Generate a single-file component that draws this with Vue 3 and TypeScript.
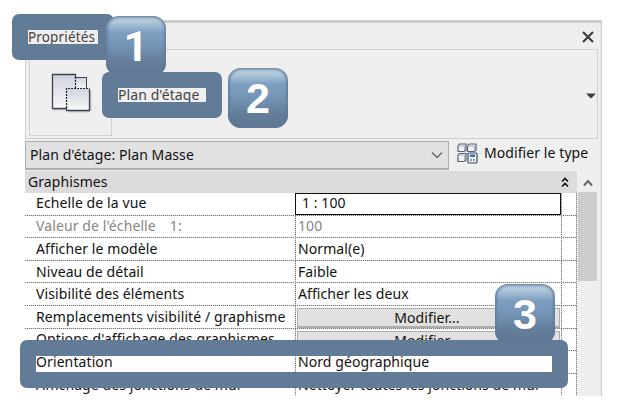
<script setup lang="ts">
interface Row {
  label: string
  value: string
  extra?: string
  kind?: 'field' | 'muted' | 'button'
}

const rows: Row[] = [
  { label: 'Echelle de la vue', value: '1 : 100', kind: 'field' },
  { label: "Valeur de l'échelle", extra: '1:', value: '100', kind: 'muted' },
  { label: 'Afficher le modèle', value: 'Normal(e)' },
  { label: 'Niveau de détail', value: 'Faible' },
  { label: 'Visibilité des éléments', value: 'Afficher les deux' },
  { label: 'Remplacements visibilité / graphisme', value: 'Modifier...', kind: 'button' },
  { label: "Options d'affichage des graphismes", value: 'Modifier...', kind: 'button' },
  { label: 'Orientation', value: 'Nord géographique' },
  { label: 'Affichage des jonctions de mur', value: 'Nettoyer toutes les jonctions de mur' },
]
</script>

<template>
  <main class="stage">
    <section class="panel">
      <header class="title">
        <span class="title-text">Propriétés</span>
        <svg class="close" width="12" height="12" viewBox="0 0 12 12"><path d="M1 1L11 11M11 1L1 11" /></svg>
      </header>

      <div class="preview">
        <div class="thumb">
          <svg width="42" height="42" viewBox="0 0 42 42">
            <defs>
              <linearGradient id="sheet" x1="0" y1="0" x2="0" y2="1">
                <stop offset="0" stop-color="#cfd3dc" />
                <stop offset="1" stop-color="#f8f9fb" />
              </linearGradient>
            </defs>
            <path d="M3 38.500H17M18 40.500H40M40.500 20V40" stroke="#c8c8c8" stroke-width="2" fill="none" />
            <rect x="24.500" y="6.500" width="12" height="12" fill="url(#sheet)" stroke="#3d4350" />
            <path d="M2.500 3.500H25.500V17.500H16.500V37.500H2.500Z" fill="url(#sheet)" />
            <path d="M16.500 37.500H2.500V3.500H25.500V6" fill="none" stroke="#3d4350" stroke-width="1.300" />
            <rect x="16.500" y="17.500" width="23" height="22" fill="url(#sheet)" />
            <path d="M39.500 17.500V39.500H16.500V37" fill="none" stroke="#3d4350" stroke-width="1.300" />
            <path d="M25.500 6V17.500M16.500 37V17.500H39" fill="none" stroke="#20242b" stroke-width="1.200" stroke-dasharray="2 1" />
          </svg>
        </div>
        <span class="preview-text">Plan d'étage</span>
        <svg class="drop" width="10" height="6" viewBox="0 0 10 6"><path d="M0 .5H10L5 5.500Z" /></svg>
      </div>

      <div class="type-bar">
        <div class="select">
          <span>Plan d'étage: Plan Masse</span>
          <svg width="12" height="8" viewBox="0 0 12 8"><path d="M1 1.500L6 6.500L11 1.500" /></svg>
        </div>
        <div class="edit-type">
          <svg width="21" height="21" viewBox="0 0 21 21">
            <g fill="#eef1f5" stroke="#596273" stroke-width="1.200">
              <path d="M1 3L2.500 1H9V7L7.500 8.500H1ZM10.500 3L12 1H19V7L17.500 8.500H10.500Z" />
              <path d="M1 12L2.500 10.500H9V17L7.500 18.500H1Z" />
              <path d="M1 3H7.500V8.500M10.500 3H17.500V8.500M1 12H7.500V18.500" fill="none" stroke="#9aa2af" stroke-width=".8" />
              <rect x="11" y="10" width="9" height="10" rx="1" stroke="#424b5c" />
            </g>
            <path d="M13 11.500H18V14H13Z" fill="#2474c5" />
            <path d="M13 17L14.500 15.500V18.500ZM18 17L16.500 15.500V18.500Z" fill="#424b5c" />
          </svg>
          <span>Modifier le type</span>
        </div>
      </div>

      <div class="grid-area">
        <div class="table">
          <div class="group">
            <span>Graphismes</span>
            <svg width="8" height="11" viewBox="0 0 8 11"><path d="M1 4.500L4 1.500L7 4.500M1 9.500L4 6.500L7 9.500" /></svg>
          </div>
          <div v-for="row in rows" :key="row.label" class="row" :class="row.kind">
            <div class="label"><span>{{ row.label }}</span><span v-if="row.extra" class="extra">{{ row.extra }}</span></div>
            <div class="value"><span>{{ row.value }}</span></div>
            <div class="end"></div>
          </div>
        </div>
        <div class="scroll">
          <svg width="10" height="8" viewBox="0 0 10 8"><path d="M1 6.500L5 2L9 6.500" /></svg>
          <div class="scroll-thumb"></div>
        </div>
      </div>
    </section>

    <div class="mark mark-title"></div>
    <div class="badge badge-one">1</div>
    <div class="mark mark-plan"></div>
    <div class="badge badge-two">2</div>
    <div class="mark mark-row"></div>
    <div class="badge badge-three">3</div>
  </main>
</template>

<style>
body {
  margin: 0;
  background: #fff;
}
</style>

<style scoped>
* {
  box-sizing: border-box;
}
.stage {
  position: relative;
  width: 624px;
  height: 408px;
  padding: 20px 22px 12px 25px;
  overflow: hidden;
  background: #fff;
  color: #111;
  font: 14px/18px "Noto Sans", "Open Sans", sans-serif;
  letter-spacing: 0.08px;
  white-space: nowrap;
}
.panel {
  width: 577px;
  height: 376px;
  overflow: hidden;
  background: #efefef;
  border-top: 3px solid #cdcdcd;
  border-right: 1px solid #c9c9c9;
}
.title {
  display: flex;
  justify-content: space-between;
  height: 26px;
  padding: 5px 7px 0 3px;
  background: #eee;
  color: #444;
}
.title-text {
  font-size: 13.5px;
  letter-spacing: 0.15px;
}
.close {
  margin-top: 3px;
}
.close path {
  fill: none;
  stroke: #3c3c3c;
  stroke-width: 2.1;
}
.preview {
  display: flex;
  width: 573px;
  height: 90px;
  padding: 0 1px 0 3px;
  border: 1px solid #d0d0d0;
}
.thumb {
  width: 83px;
  height: 86px;
  padding: 21px 0 0 20px;
  border: 1px solid #d2d2d2;
  border-top: 0;
}
.preview-text {
  padding: 36px 0 0 6px;
  color: #444;
}
.drop {
  margin: 43px 0 0 auto;
  fill: #3c3c3c;
}
.type-bar {
  display: flex;
  height: 32px;
  padding-top: 2px;
}
.select {
  display: flex;
  justify-content: space-between;
  align-items: center;
  width: 424px;
  height: 29px;
  padding: 0 5px 0 4px;
  background: #e1e1e1;
  border: 1px solid #adadad;
  border-bottom-width: 2px;
}
.select path,
.scroll path {
  fill: none;
  stroke: #666;
  stroke-width: 1.4;
}
.edit-type {
  display: flex;
  padding: 2px 0 0 8px;
}
.edit-type span {
  padding: 1px 0 0 6px;
}
.grid-area {
  display: flex;
}
.table {
  width: 552px;
  background: #fff;
}
.group {
  display: flex;
  justify-content: space-between;
  height: 22px;
  padding: 2px 8px 0 3px;
  background: #dcdcdc;
}
.group svg {
  margin-top: 4px;
}
.group path {
  fill: none;
  stroke: #111;
  stroke-width: 1.7;
}
.row {
  display: grid;
  grid-template-columns: 270px 266px 16px;
  height: 22.6px;
  background: repeating-linear-gradient(90deg, #777 0 1px, #ddd 1px 2px) left bottom / 100% 1px no-repeat;
}
.row:last-child {
  background: none;
}
.label,
.value {
  padding-top: 1.8px;
}
.row:first-of-type .label,
.field .label {
  padding-top: 1px;
}
.label {
  padding-left: 11px;
  letter-spacing: 0.1px;
}
.value {
  padding-left: 3px;
}
.value,
.end {
  background: repeating-linear-gradient(#777 0 1px, #ddd 1px 2px) left top / 1px 100% no-repeat;
}
.end {
  background-image: repeating-linear-gradient(#777 0 1px, #ddd 1px 2px), repeating-linear-gradient(#777 0 1px, #ddd 1px 2px);
  background-position: left top, right top;
}
.extra {
  margin-left: 14px;
}
.field .value {
  height: 22px;
  padding: 0 0 0 6px;
  background: #fff;
  border: 1.5px solid #111;
}
.muted {
  color: #858585;
}
.button .value {
  padding: 2px 1px 1px 2px;
}
.button .value span {
  display: block;
  height: 20px;
  line-height: 17px;
  padding-right: 3px;
  background: #e1e1e1;
  border: 1px solid #adadad;
  border-bottom-width: 2px;
  text-align: center;
}
.scroll {
  width: 19px;
  margin-left: 1px;
  text-align: center;
}
.scroll svg {
  display: block;
  margin: 8px auto 5px;
}
.scroll path {
  stroke-width: 2;
}
.scroll-thumb {
  height: 89px;
  background: #cdcdcd;
}
.mark {
  position: absolute;
  border: 16px solid #627c97;
  border-radius: 7px;
}
.mark-title {
  left: 12px;
  top: 14px;
  width: 102px;
  height: 46px;
}
.mark-plan {
  left: 102px;
  top: 72px;
  width: 120px;
  height: 46px;
}
.mark-row {
  left: 20px;
  top: 340px;
  width: 548px;
  height: 48px;
}
.badge {
  position: absolute;
  width: 60px;
  height: 60px;
  border-radius: 13px;
  background: linear-gradient(#c6d7e5 0, #abc3d8 12%, #7f9fc2 27%, #7797b9 45%, #657f9b 75%, #5d7690 100%);
  box-shadow: inset 0 0 3px 1.5px #5f7b98;
  color: #fff;
  font: bold 43px/60px "Liberation Sans", sans-serif;
  text-align: center;
  text-shadow: 0 0 1px #6b86a3;
}
.badge-one {
  left: 106px;
  top: 16px;
  font-family: Roboto, sans-serif;
}
.badge-two {
  left: 228px;
  top: 68px;
}
.badge-three {
  left: 495px;
  top: 284px;
}
</style>
